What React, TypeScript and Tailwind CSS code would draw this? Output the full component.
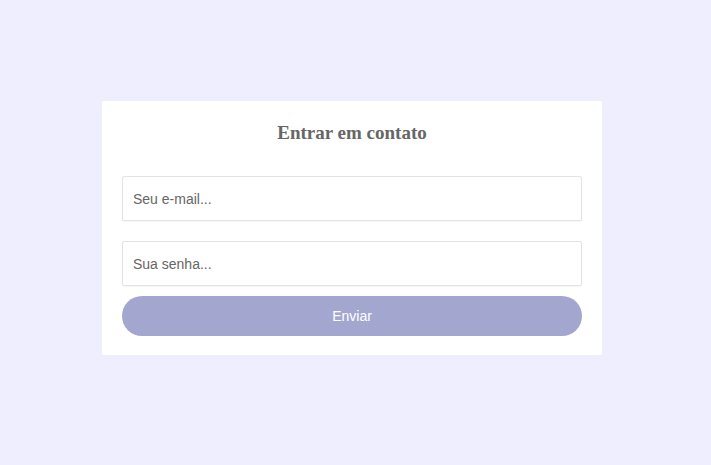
export default function App() {
  return (
    <div className="flex h-[465px] w-full items-start bg-[#eeeeff] pl-[102px] pt-[101px] font-['Liberation_Sans',Arial,sans-serif]">
      <form
        className="flex w-[500px] flex-col bg-white px-5 pb-[19px] pt-5"
        onSubmit={(e) => e.preventDefault()}
      >
        <h2 className="mb-[31px] text-center font-['Liberation_Serif','Times_New_Roman',serif] text-[19px] font-bold leading-6 text-[#666]">
          Entrar em contato
        </h2>
        <input
          type="email"
          placeholder="Seu e-mail..."
          className="h-[45px] w-full rounded-[2px] border border-[#e3e3e3] px-[10px] text-[14px] text-[#555] shadow-[0_1px_1px_rgba(0,0,0,0.04)] outline-none placeholder:text-[#666]"
        />
        <input
          type="password"
          placeholder="Sua senha..."
          className="mt-5 h-[45px] w-full rounded-[2px] border border-[#e3e3e3] px-[10px] text-[14px] text-[#555] shadow-[0_1px_1px_rgba(0,0,0,0.04)] outline-none placeholder:text-[#666]"
        />
        <button
          type="submit"
          className="mt-[10px] h-[40px] w-full rounded-full bg-[#a3a7cf] text-[14px] text-white"
        >
          Enviar
        </button>
      </form>
    </div>
  );
}
